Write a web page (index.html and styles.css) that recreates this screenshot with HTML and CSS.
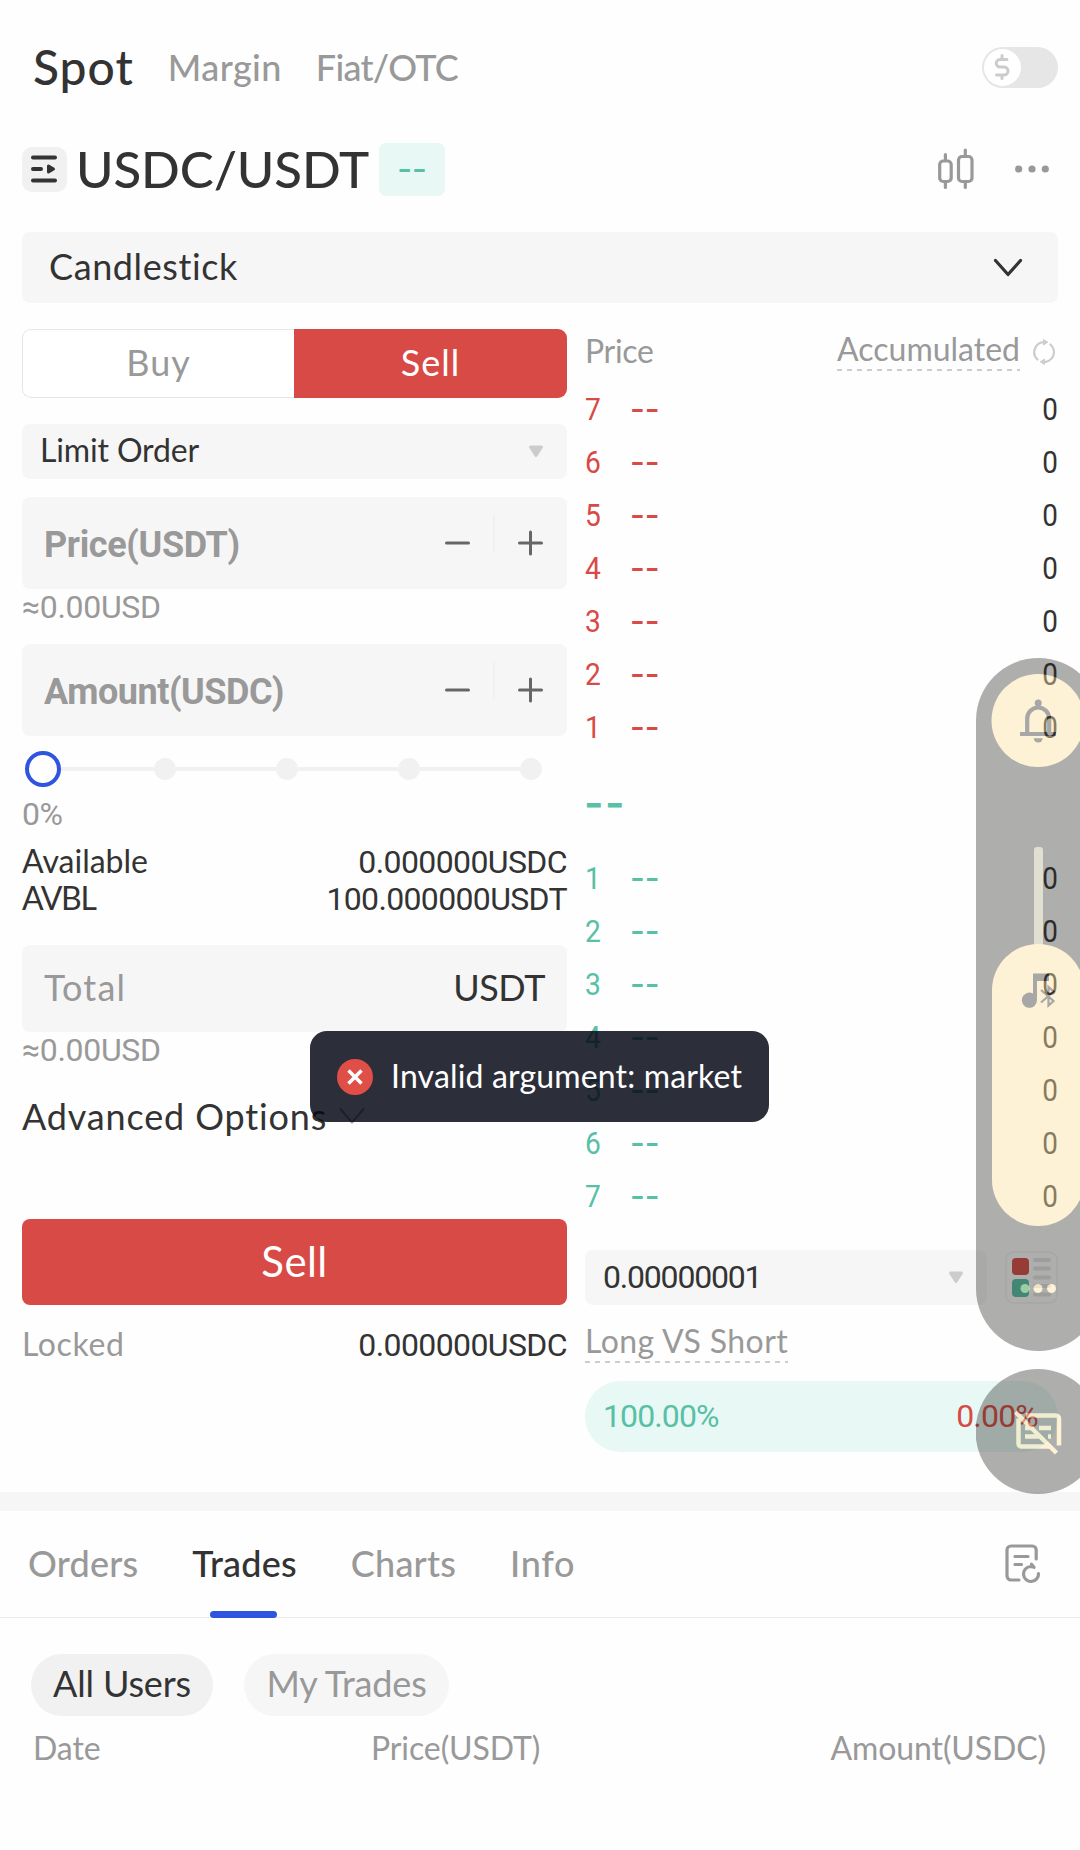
FILE: index.html
```html
<!DOCTYPE html>
<html lang="en">
<head>
  <meta charset="UTF-8" />
  <meta name="viewport" content="width=device-width, initial-scale=1.0" />
  <title>USDC/USDT</title>
  <link rel="stylesheet" href="styles.css">
</head>
<body>
  <header class="top">
    <span class="top-tab active">Spot</span>
    <span class="top-tab">Margin</span>
    <span class="top-tab fiat">Fiat/OTC</span>
    <div class="toggle">
      <div class="knob">
        <svg width="16" height="26" viewBox="0 0 16 26" fill="none" stroke="#ccc" stroke-width="3" stroke-linecap="round"><path d="M13 5.500H6a3.700 3.700 0 0 0 0 7.500h4a4 4 0 0 1 0 8H2.500M8 1.500v3M8 21.500v3"/></svg>
      </div>
    </div>
  </header>

  <div class="pair">
    <div class="menu">
      <svg width="28" height="28" viewBox="0 0 28 28" fill="none" stroke="#333" stroke-width="4" stroke-linecap="round"><path d="M3 2.500h22M3 14h8M3 25.500h22"/><path d="M18.500 11v6l5-3z" fill="#333" stroke-width="3" stroke-linejoin="round"/></svg>
    </div>
    <h1>USDC/USDT</h1>
    <span class="change">--</span>
    <svg class="candles" width="36" height="42" viewBox="0 0 36 42" fill="none" stroke="#999" stroke-width="3.200" stroke-linecap="round"><rect x="1.700" y="13" width="11.500" height="20.500" rx="3.500"/><rect x="20.500" y="8.500" width="13.500" height="25" rx="3.500"/><path d="M7.400 6.500V12M7.400 34.500v5M27.300 2v5.500M27.300 34.500v5"/></svg>
    <svg class="dots" width="34" height="8" viewBox="0 0 34 8" fill="#999"><circle cx="3.700" cy="4" r="3.600"/><circle cx="17" cy="4" r="3.600"/><circle cx="30.300" cy="4" r="3.600"/></svg>
  </div>

  <div class="chart-bar">
    <span>Candlestick</span>
    <svg width="30" height="20" viewBox="0 0 30 20" fill="none" stroke="#333" stroke-width="3.200" stroke-linecap="round" stroke-linejoin="round"><path d="M2.500 2.500L15 16.500 27.500 2.500"/></svg>
  </div>

  <main class="trade">
    <section class="form">
      <div class="sides">
        <button class="side buy">Buy</button>
        <button class="side sell">Sell</button>
      </div>
      <div class="select">
        <span>Limit Order</span>
        <svg width="16" height="13" viewBox="0 0 16 13"><path d="M2.500 2h11L8 10.500z" fill="#ccc" stroke="#ccc" stroke-width="3" stroke-linejoin="round"/></svg>
      </div>
      <div class="field">
        <b>Price(USDT)</b>
        <svg class="steps" width="100" height="56" viewBox="0 0 100 56" fill="none" stroke="#666" stroke-width="3" stroke-linecap="round"><path d="M2.500 28h22M75.500 28h22M86.500 17v22"/><path d="M50 0v36" stroke="#ebebeb" stroke-width="1"/></svg>
      </div>
      <div class="approx">≈0.00USD</div>
      <div class="field">
        <b class="amount">Amount(USDC)</b>
        <svg class="steps" width="100" height="56" viewBox="0 0 100 56" fill="none" stroke="#666" stroke-width="3" stroke-linecap="round"><path d="M2.500 28h22M75.500 28h22M86.500 17v22"/><path d="M50 0v36" stroke="#ebebeb" stroke-width="1"/></svg>
      </div>
      <div class="slider">
        <i class="handle"></i><i class="line"></i><i class="dot"></i><i class="line"></i><i class="dot"></i><i class="line"></i><i class="dot"></i><i class="line"></i><i class="dot"></i>
      </div>
      <div class="percent">0%</div>
      <div class="row first"><span>Available</span><span class="num">0.000000USDC</span></div>
      <div class="row"><span class="avbl">AVBL</span><span class="num hundred">100.000000USDT</span></div>
      <div class="total"><span>Total</span><span class="unit">USDT</span></div>
      <div class="approx">≈0.00USD</div>
      <div class="advanced">
        <span>Advanced Options</span>
        <svg width="26" height="18" viewBox="0 0 26 18" fill="none" stroke="#999" stroke-width="2"><path d="M1 1.500l12 14 12-14"/></svg>
      </div>
      <button class="submit">Sell</button>
      <div class="row locked"><span>Locked</span><span class="num">0.000000USDC</span></div>
    </section>

    <section class="book">
      <div class="book-head">
        <span class="price">Price</span>
        <span class="dashed acc">Accumulated</span>
        <svg width="24" height="28" viewBox="0 0 24 28" fill="none" stroke="#ccc" stroke-width="2.200" stroke-linecap="round"><path d="M13 4.200A10 10 0 0 0 5.500 21.500M18.500 6.500A10 10 0 0 1 11 24"/><path d="M11.500 2v5l4-2.700zM12.500 21.500v5l-4-2.500z" fill="#ccc" stroke-width="1"/></svg>
      </div>
      <div class="asks">
        <div class="level"><span>7</span><em>--</em><b>0</b></div>
        <div class="level"><span>6</span><em>--</em><b>0</b></div>
        <div class="level"><span>5</span><em>--</em><b>0</b></div>
        <div class="level"><span>4</span><em>--</em><b>0</b></div>
        <div class="level"><span>3</span><em>--</em><b>0</b></div>
        <div class="level"><span>2</span><em>--</em><b>0</b></div>
        <div class="level"><span>1</span><em>--</em><b>0</b></div>
      </div>
      <div class="last">--</div>
      <div class="bids">
        <div class="level"><span>1</span><em>--</em><b>0</b></div>
        <div class="level"><span>2</span><em>--</em><b>0</b></div>
        <div class="level"><span>3</span><em>--</em><b>0</b></div>
        <div class="level"><span>4</span><em>--</em><b>0</b></div>
        <div class="level"><span>5</span><em>--</em><b>0</b></div>
        <div class="level"><span>6</span><em>--</em><b>0</b></div>
        <div class="level"><span>7</span><em>--</em><b>0</b></div>
      </div>
      <div class="depth">
        <div class="select">
          <span class="tick">0.00000001</span>
          <svg width="16" height="13" viewBox="0 0 16 13"><path d="M2.500 2h11L8 10.500z" fill="#ccc" stroke="#ccc" stroke-width="3" stroke-linejoin="round"/></svg>
        </div>
        <svg width="53" height="53" viewBox="0 0 53 53"><rect x="1" y="1" width="51" height="51" rx="8" fill="none" stroke="#f1f1f1" stroke-width="1.500"/><rect x="7" y="7" width="17" height="17" rx="4" fill="#d84a45"/><rect x="7" y="28" width="17" height="18" rx="4" fill="#57c0a5"/><path d="M30 9h14M30 17.500h14M30 26.500h14M30 35h14M30 43.500h14" stroke="#e3e3e3" stroke-width="4" stroke-linecap="round"/></svg>
      </div>
      <div class="ratio-head"><span class="dashed">Long VS Short</span></div>
      <div class="ratio"><span>100.00%</span><span class="short">0.00%</span></div>
    </section>
  </main>

  <nav class="tabs">
    <span>Orders</span>
    <span class="current">Trades</span>
    <span>Charts</span>
    <span class="info">Info</span>
    <svg width="36" height="40" viewBox="0 0 36 40" fill="none" stroke="#999" stroke-width="3.200" stroke-linecap="round" stroke-linejoin="round"><path d="M31.200 15V6a4 4 0 0 0-4-4H6a4 4 0 0 0-4 4v26a4 4 0 0 0 4 4h8"/><path d="M10 12.500h13M10 20.500h6.500"/><path d="M33.500 29.500a7.500 7.500 0 1 1-8-7l3.500.800-2.500-3"/></svg>
  </nav>

  <div class="filters">
    <span class="on">All Users</span>
    <span>My Trades</span>
  </div>
  <div class="columns">
    <span>Date</span>
    <span>Price(USDT)</span>
    <span>Amount(USDC)</span>
  </div>

  <div class="toast">
    <svg width="36" height="36" viewBox="0 0 36 36"><circle cx="18" cy="18" r="18" fill="#e04e48"/><path d="M11.500 11.500l13 13M24.500 11.500l-13 13" stroke="#fff" stroke-width="3.500"/></svg>
    <span>Invalid argument: market</span>
  </div>

  <!-- system volume panel, runs off the right edge -->
  <svg class="volume" width="104" height="836" viewBox="0 0 104 836">
    <rect class="shade" x="0" y="0" width="125" height="693" rx="62.500"/>
    <circle class="shade" cx="62" cy="773.500" r="62.500"/>
    <circle class="cream" cx="62" cy="62.500" r="46.500"/>
    <g class="glyph">
      <path class="bell" d="M51.200 75V60.500a11 11 0 0 1 22 0V75M44 76h36"/>
      <circle cx="62.200" cy="45" r="3.500"/>
      <path d="M57.700 80.200h9a4.500 4.200 0 0 1-9 0z"/>
    </g>
    <rect class="track" x="58" y="189" width="9" height="110" rx="3"/>
    <rect class="cream" x="16" y="286" width="92.500" height="282" rx="46"/>
    <g class="glyph">
      <path d="M57 315.500h16v7.500H61v19a7.600 7.600 0 1 1-4-6.500z"/>
      <path class="bt" d="M65 332l12.500 11-5 4.500V329l5 4.500-12.500 11"/>
    </g>
    <g class="cream"><circle cx="49" cy="630.500" r="4.500"/><circle cx="62" cy="630.500" r="4.500"/><circle cx="75.500" cy="630.500" r="4.500"/></g>
    <g class="caption">
      <path d="M50 757.500h30a3 3 0 0 1 3 3v27M75 788.500H45.500a3 3 0 0 1-3-3v-25"/>
      <path d="M49 770h9M63 770h12M49 778.500h16M72 778.500h3M39.500 754l41 41"/>
    </g>
  </svg>
</body>
</html>
```
FILE: styles.css
```css
* {
  box-sizing: border-box;
}
body {
  margin: 0;
  width: 1080px;
  height: 1850px;
  position: relative;
  overflow: hidden;
  background: #fefefe;
  color: #333;
  font-family: Lato, 'Noto Sans', sans-serif;
  font-size: 32px;
}
svg {
  display: block;
  flex: none;
}
button {
  border: none;
  padding: 0;
  font-family: inherit;
}
b {
  font-weight: 400;
}
em, i {
  font-style: normal;
}

/* header */
.top {
  display: flex;
  align-items: center;
  gap: 34px;
  height: 132px;
  padding: 0 22px 0 33px;
}
.top-tab {
  font-size: 36px;
  font-weight: 500;
  letter-spacing: 0.4px;
  padding-top: 1px;
  color: #999;
}
.top-tab.active {
  font-size: 48px;
  letter-spacing: 1px;
  padding-top: 0;
  color: #333;
}
.top-tab.fiat {
  letter-spacing: -0.7px;
}
.toggle {
  width: 76px;
  height: 41px;
  margin-left: auto;
  margin-top: 2px;
  padding: 2px;
  border-radius: 21px;
  background: #e6e6e6;
}
.knob {
  display: flex;
  align-items: center;
  justify-content: center;
  width: 37px;
  height: 37px;
  padding-right: 1px;
  border-radius: 50%;
  background: #fff;
}
.pair {
  display: flex;
  align-items: center;
  height: 74px;
  padding: 0 31px 0 22px;
}
.menu {
  display: flex;
  align-items: center;
  justify-content: center;
  width: 45px;
  height: 45px;
  padding-right: 1px;
  border-radius: 10px;
  background: #f1f1f1;
}
h1 {
  margin: -2px 0 0 9px;
  font-size: 51px;
  font-weight: 500;
  letter-spacing: -0.12px;
}
.change {
  width: 66px;
  height: 53px;
  margin-left: 10px;
  border-radius: 7px;
  background: #e8f8f5;
  color: #57c0a5;
  font: 500 32px/51px Inter, sans-serif;
  text-align: center;
}
.candles {
  margin-left: auto;
  margin-right: 41px;
}
.chart-bar {
  display: flex;
  align-items: center;
  justify-content: space-between;
  height: 71px;
  margin: 26px 22px 0;
  padding: 0 35px 0 27px;
  border-radius: 8px;
  background: #f6f6f6;
  font-size: 36px;
  letter-spacing: 0.6px;
}
.chart-bar span {
  margin-top: -3px;
}

/* order form */
.trade {
  display: grid;
  grid-template-columns: 545px 473px;
  gap: 18px;
  padding: 26px 22px 0;
}
.sides {
  display: grid;
  grid-template-columns: 272px 273px;
  height: 69px;
}
.side {
  padding-bottom: 3px;
  font-size: 36px;
  letter-spacing: 1px;
}
.side.buy {
  border: 1px solid #e6e6e6;
  border-right: none;
  border-radius: 9px 0 0 9px;
  background: #fff;
  color: #999;
}
.side.sell {
  border-radius: 0 9px 9px 0;
  background: #d84a45;
  color: #fff;
}
.select {
  display: flex;
  align-items: center;
  justify-content: space-between;
  height: 55px;
  padding: 0 23px 0 18px;
  border-radius: 8px;
  background: #f6f6f6;
  letter-spacing: -0.15px;
}
.select span {
  margin-top: -4px;
}
.form .select {
  margin-top: 26px;
}
.field {
  display: flex;
  align-items: center;
  justify-content: space-between;
  height: 92px;
  margin-top: 18px;
  padding: 0 23px 0 22px;
  border-radius: 8px;
  background: #f6f6f6;
  color: #999;
}
.field b {
  font: 700 36px Roboto, sans-serif;
  letter-spacing: -0.36px;
  margin-top: 3px;
}
.field .amount {
  letter-spacing: -0.45px;
}
.approx {
  height: 35px;
  line-height: 36px;
  font-family: Roboto, sans-serif;
  letter-spacing: -0.3px;
  color: #999;
}
.approx + .field {
  margin-top: 20px;
}
.slider {
  display: flex;
  align-items: center;
  height: 60px;
  padding: 6px 25px 0 3px;
}
.handle {
  width: 36px;
  height: 36px;
  border: 4px solid #2f54e0;
  border-radius: 50%;
}
.line {
  flex: 1;
  height: 4px;
  background: #f1f1f1;
}
.handle + .line {
  flex: 0 0 93px;
}
.dot {
  width: 22px;
  height: 22px;
  border-radius: 50%;
  background: #f1f1f1;
}
.percent {
  line-height: 36px;
  font-family: Roboto, sans-serif;
  letter-spacing: -0.5px;
  color: #999;
}
.row {
  display: flex;
  justify-content: space-between;
  height: 37px;
  line-height: 36px;
}
.row.first {
  margin-top: 11px;
}
.row .num {
  font-family: Roboto, sans-serif;
  letter-spacing: -0.6px;
  line-height: 38px;
}
.row .hundred {
  letter-spacing: -0.65px;
}
.avbl {
  letter-spacing: -1.3px;
}
.total {
  display: flex;
  align-items: center;
  justify-content: space-between;
  height: 87px;
  margin-top: 28px;
  padding: 0 22px 3px;
  border-radius: 8px;
  background: #f6f6f6;
  color: #999;
  font-size: 36px;
  letter-spacing: 1.2px;
}
.unit {
  color: #333;
  letter-spacing: -0.4px;
}
.advanced {
  display: flex;
  align-items: center;
  gap: 12px;
  height: 50px;
  margin-top: 24px;
  font-size: 36px;
  letter-spacing: 0.85px;
}
.submit {
  display: block;
  width: 545px;
  height: 86px;
  margin-top: 78px;
  padding-bottom: 2px;
  border-radius: 8px;
  background: #d84a45;
  color: #fff;
  font-size: 42px;
  letter-spacing: 0.4px;
}
.locked {
  margin-top: 21px;
  color: #999;
  letter-spacing: 0.6px;
}
.locked .num {
  color: #333;
}

/* order book */
.book-head {
  display: flex;
  align-items: flex-start;
  height: 53px;
  color: #999;
}
.book-head .price {
  line-height: 43px;
  letter-spacing: -0.3px;
}
.book-head .acc {
  margin: -2px 12px 0 auto;
}
.book-head svg {
  margin: 9px 2px 0 0;
}
.dashed {
  display: inline-block;
  height: 44px;
  line-height: 43px;
  background: repeating-linear-gradient(90deg, #ccc 0 5px, transparent 5px 10px) 0 100% / 100% 2px no-repeat;
}
.level {
  display: flex;
  height: 53px;
  line-height: 54px;
  font-family: Roboto, sans-serif;
  color: #d84a45;
}
.bids .level {
  color: #57c0a5;
}
.level span {
  width: 45px;
  transform: scaleX(0.88);
  transform-origin: left;
}
.level em {
  font-family: Inter, sans-serif;
  font-weight: 500;
}
.level b {
  margin-left: auto;
  transform: scaleX(0.87);
  transform-origin: right;
  color: #333;
}
.last {
  height: 98px;
  line-height: 99px;
  margin-left: -1px;
  margin-right: 1px;
  font-family: Inter, sans-serif;
  font-size: 42px;
  font-weight: 600;
  letter-spacing: 1.5px;
  color: #57c0a5;
}
.depth {
  display: flex;
  align-items: center;
  justify-content: space-between;
  margin-top: 28px;
}
.depth .select {
  width: 402px;
}
.select .tick {
  margin-top: -1px;
  font-family: Roboto, sans-serif;
  letter-spacing: -1.2px;
}
.ratio-head {
  height: 44px;
  margin-top: 14px;
  color: #999;
  letter-spacing: 0.4px;
}
.ratio {
  display: flex;
  align-items: center;
  justify-content: space-between;
  height: 71px;
  margin-top: 18px;
  padding: 0 20px 2px 18px;
  border-radius: 36px;
  background: #e8f8f5;
  color: #57c0a5;
  font-family: Roboto, sans-serif;
  letter-spacing: -0.9px;
}
.short {
  color: #d84a45;
  letter-spacing: -0.8px;
}

/* bottom tabs */
.tabs {
  display: flex;
  align-items: center;
  gap: 54px;
  height: 126px;
  margin-top: 40px;
  padding: 0 39px 0 28px;
  border-top: 19px solid #f6f6f6;
  border-bottom: 1px solid #ebebeb;
  color: #999;
  font-size: 36px;
  font-weight: 500;
  letter-spacing: 0.2px;
}
.tabs span {
  margin-top: -3px;
}
.tabs svg {
  margin-left: auto;
}
.current {
  position: relative;
  color: #333;
}
.current::after {
  content: "";
  position: absolute;
  left: 18px;
  bottom: -33px;
  width: 67px;
  height: 7px;
  border-radius: 4px;
  background: #2f54e0;
}
.info {
  letter-spacing: 0.7px;
}
.filters {
  display: flex;
  gap: 31px;
  margin: 36px 31px 0;
}
.filters span {
  height: 62px;
  width: 205px;
  border-radius: 31px;
  background: #f6f6f6;
  color: #999;
  font-size: 36px;
  line-height: 59px;
  letter-spacing: -0.15px;
  text-align: center;
}
.filters .on {
  width: 182px;
  background: #f1f1f1;
  color: #333;
}
.columns {
  display: grid;
  grid-template-columns: 338px 1fr auto;
  padding: 13px 34px 0 33px;
  color: #999;
  line-height: 38px;
  letter-spacing: -0.1px;
}

/* overlays */
.toast {
  position: absolute;
  left: 310px;
  top: 1031px;
  display: flex;
  align-items: center;
  gap: 18px;
  width: 459px;
  height: 91px;
  padding: 0 27px;
  border-radius: 17px;
  background: rgba(3, 6, 20, 0.84);
  color: #fff;
  letter-spacing: 0.16px;
  white-space: nowrap;
}
.toast span {
  margin-top: -3px;
}
.volume {
  position: absolute;
  right: 0;
  top: 658px;
  opacity: 0.41;
}
.shade {
  fill: rgba(35, 33, 28, 0.87);
}
.cream {
  fill: #fde09e;
}
.glyph {
  fill: #2e2e2e;
}
.bell {
  fill: none;
  stroke: #2e2e2e;
  stroke-width: 4.2;
}
.bt {
  fill: none;
  stroke: #2e2e2e;
  stroke-width: 2.2;
}
.track {
  fill: #b8b296;
}
.caption {
  fill: none;
  stroke: #fde09e;
  stroke-width: 4.5;
}
```
